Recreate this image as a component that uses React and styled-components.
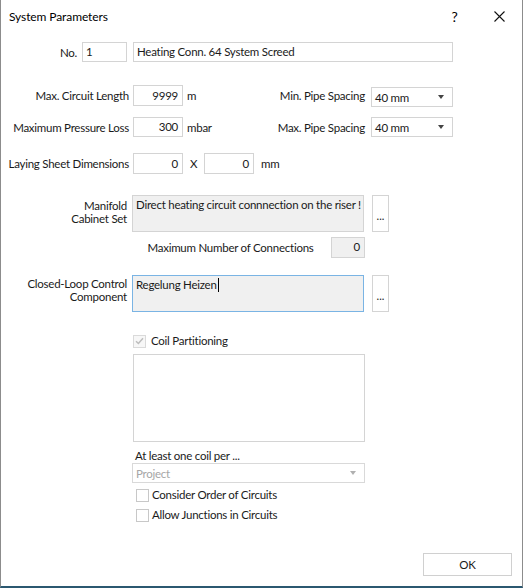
import React from 'react';
import styled, { createGlobalStyle } from 'styled-components';

const Global = createGlobalStyle`
  html, body { margin: 0; padding: 0; background: #fff; }
  body {
    font-family: Lato, "Noto Sans", "DejaVu Sans", sans-serif;
    font-size: 11.5px;
    letter-spacing: -0.25px;
    color: #1a1a1a;
  }
  * { box-sizing: border-box; }
`;

const Window = styled.div`
  width: 523px;
  height: 588px;
  background: #fff;
  border-left: 1px solid #8c8c8c;
  border-right: 1px solid #8c8c8c;
  border-bottom: 2px solid #2b5870;
  display: flex;
  flex-direction: column;
`;

const TitleBar = styled.div`
  height: 32px;
  flex: none;
  display: flex;
  align-items: center;
  padding-left: 8px;
`;

const Title = styled.div`
  flex: 1;
  font-size: 12px;
  letter-spacing: -0.1px;
  color: #000;
`;

const TitleButton = styled.div`
  width: 45px;
  height: 32px;
  display: flex;
  align-items: center;
  justify-content: center;
  font-size: 14px;
  color: #000;
`;

const Row = styled.div`
  display: flex;
  align-items: ${(p) => p.$align || 'center'};
  margin-top: ${(p) => p.$mt || 0}px;
`;

const Label = styled.div`
  width: ${(p) => p.$w}px;
  flex: none;
  padding-right: ${(p) => (p.$pr ?? 4)}px;
  text-align: right;
  line-height: 13px;
  padding-top: ${(p) => p.$pt || 0}px;
  white-space: nowrap;
`;

const Input = styled.div`
  width: ${(p) => p.$w}px;
  height: ${(p) => p.$h || 20}px;
  flex: none;
  border: 1px solid ${(p) => (p.$focus ? '#7ab4e4' : '#d4d4d4')};
  background: ${(p) => (p.$grey ? '#f0f0f0' : '#fff')};
  display: flex;
  align-items: ${(p) => (p.$top ? 'flex-start' : 'center')};
  justify-content: ${(p) => (p.$right ? 'flex-end' : 'flex-start')};
  padding: ${(p) => (p.$top ? '2px 4px 0 3px' : '0 4px 0 3px')};
  line-height: 14px;
  margin-left: ${(p) => p.$ml || 0}px;
  margin-top: ${(p) => p.$mt || 0}px;
  white-space: nowrap;
  overflow: hidden;
`;

const Caret = styled.span`
  display: inline-block;
  width: 1px;
  height: 14px;
  background: #000;
  margin-left: 1px;
  vertical-align: top;
`;

const Unit = styled.div`
  padding-left: ${(p) => p.$pl ?? 4}px;
  white-space: nowrap;
`;

const ParamGrid = styled.div`
  display: grid;
  grid-template-columns: 132px 50px 60px 128px 82px;
  grid-template-rows: 21px 20px;
  row-gap: 11px;
  align-items: center;
  margin-top: 23px;
`;

const GridLabel = styled.div`
  text-align: right;
  padding-right: ${(p) => p.$pr || 4}px;
  white-space: nowrap;
`;

const Select = styled.div`
  width: ${(p) => p.$w}px;
  height: 20px;
  flex: none;
  border: 1px solid ${(p) => (p.$disabled ? '#d9d9d9' : '#d4d4d4')};
  display: flex;
  align-items: center;
  justify-content: space-between;
  padding: 0 8px 0 3px;
  color: ${(p) => (p.$disabled ? '#a6a6a6' : '#1a1a1a')};
  margin-top: ${(p) => p.$mt || 0}px;
`;

const Arrow = styled.span`
  width: 0;
  height: 0;
  border-left: 3.5px solid transparent;
  border-right: 3.5px solid transparent;
  border-top: 4px solid ${(p) => (p.$disabled ? '#b0b0b0' : '#444')};
`;

const Sep = styled.div`
  width: 21px;
  text-align: center;
  flex: none;
`;

const DotsButton = styled.div`
  width: 17px;
  height: 37px;
  flex: none;
  margin-left: 8px;
  border: 1px solid #d4d4d4;
  background: #fff;
  display: flex;
  align-items: center;
  justify-content: center;
  overflow: hidden;
  padding-top: 3px;
  font-size: 11px;
  letter-spacing: 0;
  color: #222;
`;

const Indented = styled.div`
  margin-left: 131px;
  width: 233px;
  display: flex;
  flex-direction: column;
`;

const ConnLabel = styled.div`
  flex: 1;
  text-align: center;
  padding-right: 2px;
`;

const CheckRow = styled.div`
  display: flex;
  align-items: center;
  height: 14px;
  line-height: 14px;
  margin-top: ${(p) => p.$mt || 0}px;
  margin-left: ${(p) => p.$ml || 0}px;
`;

const Box = styled.span`
  width: 13px;
  height: 13px;
  flex: none;
  border: 1px solid ${(p) => (p.$disabled ? '#dadada' : '#c8c8c8')};
  background: ${(p) => (p.$disabled ? '#f7f7f7' : '#fff')};
  display: flex;
  align-items: center;
  justify-content: center;
  margin-right: ${(p) => p.$mr || 4}px;
`;

const ListBox = styled.div`
  height: 88px;
  border: 1px solid #d4d4d4;
  margin-top: 6px;
  margin-left: 1px;
  background: #fff;
`;

const Caption = styled.div`
  margin-top: 7px;
  margin-left: 3px;
  line-height: 14px;
`;

const Footer = styled.div`
  margin-top: auto;
  display: flex;
  justify-content: flex-end;
  padding: 0 10px 10px 0;
`;

const Button = styled.div`
  width: 89px;
  height: 23px;
  border: 1px solid #d0d0d0;
  background: #fff;
  display: flex;
  align-items: center;
  justify-content: center;
  color: #1a1a1a;
`;

const CloseIcon = () => (
  <svg width="11" height="11" viewBox="0 0 11 11">
    <path d="M0.5 0.5 L10.5 10.5 M10.5 0.5 L0.5 10.5" stroke="#111" strokeWidth="1.1" fill="none" />
  </svg>
);

const CheckMark = () => (
  <svg width="9" height="8" viewBox="0 0 9 8">
    <path d="M1 4.2 L3.4 6.5 L8 1.2" stroke="#bdbdbd" strokeWidth="1.5" fill="none" />
  </svg>
);

export default function App() {
  return (
    <>
      <Global />
      <Window>
        <TitleBar>
          <Title>System Parameters</Title>
          <TitleButton>?</TitleButton>
          <TitleButton>
            <CloseIcon />
          </TitleButton>
        </TitleBar>

        <Row $mt={10}>
          <Label $w={81} $pr={5}>No.</Label>
          <Input $w={45}>1</Input>
          <Input $w={320} $ml={6}>Heating Conn. 64 System Screed</Input>
        </Row>

        <ParamGrid>
          <GridLabel>Max. Circuit Length</GridLabel>
          <Input $w={50} $h={21} $right>9999</Input>
          <Unit>m</Unit>
          <GridLabel $pr={6}>Min. Pipe Spacing</GridLabel>
          <Select $w={82} $mt={3}>
            <span>40 mm</span>
            <Arrow />
          </Select>

          <GridLabel>Maximum Pressure Loss</GridLabel>
          <Input $w={50} $right>300</Input>
          <Unit>mbar</Unit>
          <GridLabel $pr={6}>Max. Pipe Spacing</GridLabel>
          <Select $w={82}>
            <span>40 mm</span>
            <Arrow />
          </Select>
        </ParamGrid>

        <Row $mt={16}>
          <Label $w={132}>Laying Sheet Dimensions</Label>
          <Input $w={50} $h={21} $right>0</Input>
          <Sep>X</Sep>
          <Input $w={50} $h={21} $right>0</Input>
          <Unit $pl={7}>mm</Unit>
        </Row>

        <Row $mt={21} $align="flex-start">
          <Label $w={131} $pr={5} $pt={4}>
            Manifold
            <br />
            Cabinet Set
          </Label>
          <Input $w={232} $h={37} $grey $top>Direct heating circuit connnection on the riser !</Input>
          <DotsButton>...</DotsButton>
        </Row>

        <Row $mt={5}>
          <Indented>
            <Row>
              <ConnLabel>Maximum Number of Connections</ConnLabel>
              <Input $w={34} $h={21} $grey $right $top>0</Input>
            </Row>
          </Indented>
        </Row>

        <Row $mt={17} $align="flex-start">
          <Label $w={131} $pr={5} $pt={2}>
            Closed-Loop Control
            <br />
            Component
          </Label>
          <Input $w={232} $h={37} $grey $focus $top>
            <span>Regelung Heizen</span>
            <Caret />
          </Input>
          <DotsButton>...</DotsButton>
        </Row>

        <Indented>
          <CheckRow $mt={22} $ml={1}>
            <Box $disabled $mr={5}>
              <CheckMark />
            </Box>
            <span>Coil Partitioning</span>
          </CheckRow>
          <ListBox />
          <Caption>At least one coil per ...</Caption>
          <Select $w={233} $disabled>
            <span>Project</span>
            <Arrow $disabled />
          </Select>
          <CheckRow $mt={5} $ml={4}>
            <Box $mr={3} />
            <span>Consider Order of Circuits</span>
          </CheckRow>
          <CheckRow $mt={6} $ml={4}>
            <Box $mr={3} />
            <span>Allow Junctions in Circuits</span>
          </CheckRow>
        </Indented>

        <Footer>
          <Button>OK</Button>
        </Footer>
      </Window>
    </>
  );
}
